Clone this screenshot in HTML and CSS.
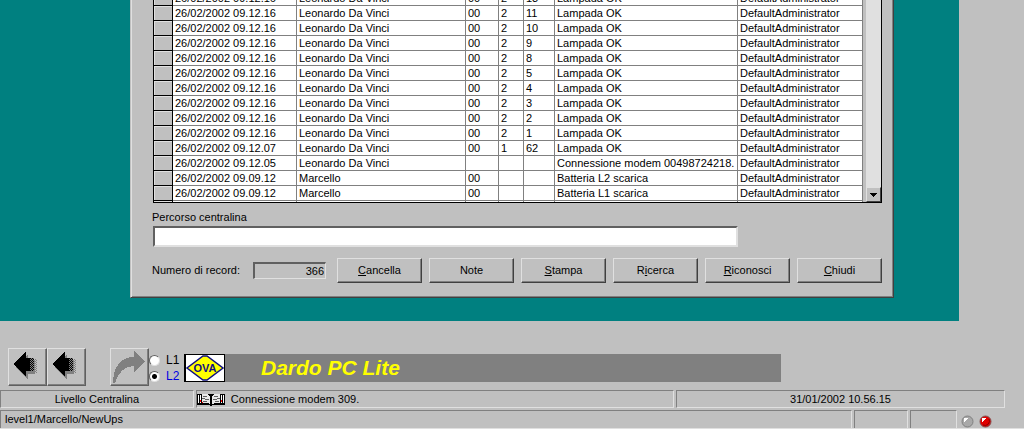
FILE: index.html
```html
<!DOCTYPE html>
<html lang="it">
<head>
<meta charset="utf-8">
<meta name="viewport" content="width=device-width, initial-scale=1">
<title>Dardo PC Lite</title>
<link rel="stylesheet" href="styles.css">
</head>
<body>
<main class="desktop">
  <section class="dialog">
    <div class="grid">
      <table class="log">
        <colgroup>
          <col class="c-mark"><col class="c-date"><col class="c-site"><col class="c-unit"><col class="c-line"><col class="c-lamp"><col class="c-event"><col class="c-user">
        </colgroup>
        <tbody>
          <tr><th></th><td>26/02/2002 09.12.16</td><td>Leonardo Da Vinci</td><td>00</td><td>2</td><td>13</td><td>Lampada OK</td><td>DefaultAdministrator</td></tr>
          <tr><th></th><td>26/02/2002 09.12.16</td><td>Leonardo Da Vinci</td><td>00</td><td>2</td><td>11</td><td>Lampada OK</td><td>DefaultAdministrator</td></tr>
          <tr><th></th><td>26/02/2002 09.12.16</td><td>Leonardo Da Vinci</td><td>00</td><td>2</td><td>10</td><td>Lampada OK</td><td>DefaultAdministrator</td></tr>
          <tr><th></th><td>26/02/2002 09.12.16</td><td>Leonardo Da Vinci</td><td>00</td><td>2</td><td>9</td><td>Lampada OK</td><td>DefaultAdministrator</td></tr>
          <tr><th></th><td>26/02/2002 09.12.16</td><td>Leonardo Da Vinci</td><td>00</td><td>2</td><td>8</td><td>Lampada OK</td><td>DefaultAdministrator</td></tr>
          <tr><th></th><td>26/02/2002 09.12.16</td><td>Leonardo Da Vinci</td><td>00</td><td>2</td><td>5</td><td>Lampada OK</td><td>DefaultAdministrator</td></tr>
          <tr><th></th><td>26/02/2002 09.12.16</td><td>Leonardo Da Vinci</td><td>00</td><td>2</td><td>4</td><td>Lampada OK</td><td>DefaultAdministrator</td></tr>
          <tr><th></th><td>26/02/2002 09.12.16</td><td>Leonardo Da Vinci</td><td>00</td><td>2</td><td>3</td><td>Lampada OK</td><td>DefaultAdministrator</td></tr>
          <tr><th></th><td>26/02/2002 09.12.16</td><td>Leonardo Da Vinci</td><td>00</td><td>2</td><td>2</td><td>Lampada OK</td><td>DefaultAdministrator</td></tr>
          <tr><th></th><td>26/02/2002 09.12.16</td><td>Leonardo Da Vinci</td><td>00</td><td>2</td><td>1</td><td>Lampada OK</td><td>DefaultAdministrator</td></tr>
          <tr><th></th><td>26/02/2002 09.12.07</td><td>Leonardo Da Vinci</td><td>00</td><td>1</td><td>62</td><td>Lampada OK</td><td>DefaultAdministrator</td></tr>
          <tr><th></th><td>26/02/2002 09.12.05</td><td>Leonardo Da Vinci</td><td></td><td></td><td></td><td>Connessione modem 00498724218.</td><td>DefaultAdministrator</td></tr>
          <tr><th></th><td>26/02/2002 09.09.12</td><td>Marcello</td><td>00</td><td></td><td></td><td>Batteria L2 scarica</td><td>DefaultAdministrator</td></tr>
          <tr><th></th><td>26/02/2002 09.09.12</td><td>Marcello</td><td>00</td><td></td><td></td><td>Batteria L1 scarica</td><td>DefaultAdministrator</td></tr>
          <tr class="stub"><th></th><td></td><td></td><td></td><td></td><td></td><td></td><td></td></tr>
        </tbody>
      </table>
      <div class="scrollbar">
        <button class="scroll-down" type="button" aria-label="Scorri in basso">
          <svg width="7" height="4" viewBox="0 0 7 4" shape-rendering="crispEdges"><path d="M0 0h7v1H6v1H5v1H4v1H3V3H2V2H1V1H0z"/></svg>
        </button>
      </div>
    </div>
    <label class="path-label" for="path">Percorso centralina</label>
    <input class="field path" id="path" type="text">
    <div class="actions">
      <label class="count-label" for="count">Numero di record:</label>
      <input class="field count" id="count" type="text" value="366" readonly>
      <div class="buttons">
        <button class="button" type="button"><u>C</u>ancella</button>
        <button class="button" type="button">Note</button>
        <button class="button" type="button"><u>S</u>tampa</button>
        <button class="button" type="button">R<u>i</u>cerca</button>
        <button class="button" type="button"><u>R</u>iconosci</button>
        <button class="button" type="button"><u>C</u>hiudi</button>
      </div>
    </div>
  </section>
</main>

<nav class="toolbar">
  <svg class="defs" width="0" height="0" aria-hidden="true">
    <defs>
      <pattern id="dither" width="2" height="2" patternUnits="userSpaceOnUse"><path d="M0 0h1v1H0zM1 1h1v1H1z" fill="#000"/><path d="M1 0h1v1H1zM0 1h1v1H0z" fill="#808080"/></pattern>
      <pattern id="haze" width="2" height="2" patternUnits="userSpaceOnUse"><path d="M0 0h1v1H0zM1 1h1v1H1z" fill="#808080"/></pattern>
      <symbol id="arrow-left" viewBox="0 0 36 36">
        <g shape-rendering="crispEdges">
          <path d="M7 18L19 5v6h7v14h-7v6z" fill="#808080"/>
          <path d="M24 10h4v14h-4z" fill="url(#haze)"/>
          <path d="M20 9h5v13h-5z" fill="url(#dither)"/>
          <path d="M4 15L17 2v7h4v13h-4v6z" fill="#000"/>
        </g>
      </symbol>
    </defs>
  </svg>
  <button class="tool" type="button" aria-label="Indietro"><svg width="36" height="36"><use href="#arrow-left"/></svg></button>
  <button class="tool" type="button" aria-label="Precedente"><svg width="36" height="36"><use href="#arrow-left"/></svg></button>
  <button class="tool tool-forward" type="button" aria-label="Avanti">
    <svg width="36" height="36" viewBox="0 0 36 36" shape-rendering="crispEdges"><path d="M2 34C2 19 9 8 23 8V2l11 10-11 11v-6C14 17 7 23 4 34z" fill="#808080"/></svg>
  </button>
  <div class="levels">
    <label class="level"><input type="radio" name="level">L1</label>
    <label class="level level-on"><input type="radio" name="level" checked>L2</label>
  </div>
  <div class="banner">
    <svg class="logo" viewBox="0 0 41 28" role="img" aria-label="OVA">
      <path d="M0 0h41v28H0z" fill="#000"/><path d="M2 1h38v26H2z" fill="#fff"/>
      <path d="M19 2h4l16 12-16 12h-4L3 14z" fill="#ff0" stroke="#101080" stroke-width="1.5"/>
      <text class="logo-text" x="21" y="18" text-anchor="middle">OVA</text>
    </svg>
    <h1 class="title">Dardo PC Lite</h1>
  </div>
</nav>

<footer class="status">
  <div class="row">
    <div class="panel level-name">Livello Centralina</div>
    <div class="panel message">
      <svg width="28" height="13" viewBox="0 0 28 13" shape-rendering="crispEdges">
        <path d="M0 1h28v11H15v1h-2v-1H0z" fill="#000"/>
        <path d="M1 2h1v8H1zM3 2h1v8H3zM24 2h1v8h-1zM26 2h1v8h-1z" fill="#fff"/>
        <path d="M5 1h5l3 2v8l-3-1H5zM23 1h-5l-3 2v8l3-1h5z" fill="#e8e8e8"/>
        <path d="M6 3h4v1H6zM5 5h3v1H5zM8 6h4v1H8zM6 8h4v1H6zM17 3h4v1h-4zM20 5h3v1h-3zM16 6h4v1h-4zM18 8h4v1h-4z" fill="#606060"/>
        <path d="M3 7h1v2H3zM5 9h1v1H5zM24 7h1v2h-1z" fill="#f00"/>
      </svg>
      <span>Connessione modem 309.</span>
    </div>
    <div class="panel clock">31/01/2002 10.56.15</div>
  </div>
  <div class="row row-last">
    <div class="panel place">level1/Marcello/NewUps</div>
    <div class="panel slot"></div>
    <div class="panel slot slot-small"></div>
    <div class="leds">
      <svg width="13" height="13" viewBox="0 0 13 13"><circle cx="6.5" cy="6.5" r="5.5" fill="#a8a8a8" stroke="#808080"/><path d="M3 3h4v1H6v1H5v1H4v1H3z" fill="#fff"/></svg>
      <svg width="13" height="13" viewBox="0 0 13 13"><circle cx="6.5" cy="6.5" r="5.5" fill="#e00000" stroke="#805050"/><path d="M10 4a4.500 4.500 0 0 1-6 6" fill="none" stroke="#900000"/><path d="M3 3h4v1H6v1H5v1H4v1H3z" fill="#fff"/></svg>
    </div>
  </div>
</footer>
</body>
</html>
```
FILE: styles.css
```css
* {
  box-sizing: border-box;
}

body {
  margin: 0;
  height: 100vh;
  display: flex;
  flex-direction: column;
  overflow: hidden;
  background: #c0c0c0;
  color: #000;
  font: 11px/13px "Liberation Sans", Arial, sans-serif;
}

button,
input {
  font: inherit;
  color: inherit;
}

.desktop {
  flex: 1;
  min-height: 0;
  margin-right: 65px;
  padding: 0 65px 23px 130px;
  display: flex;
  flex-direction: column;
  justify-content: flex-end;
  overflow: hidden;
  background: #008080;
}

.dialog {
  flex: none;
  display: flex;
  flex-direction: column;
  padding: 0 11px 14px 21px;
  background: #c0c0c0;
  border: 1px solid #404040;
  border-left-color: #c0c0c0;
  box-shadow: inset 1px 0 #e0e0e0, inset -1px -1px #808080;
}

.grid {
  display: flex;
  margin-left: 1px;
  border: 1px solid #000;
  border-top: 0;
}

.log {
  flex: 1;
  min-width: 0;
  table-layout: fixed;
  border-collapse: separate;
  border-spacing: 0;
  background: #fff;
}

.c-mark { width: 19px; }
.c-date { width: 124px; }
.c-site { width: 169px; }
.c-unit { width: 33px; }
.c-line { width: 25px; }
.c-lamp { width: 31px; }
.c-event { width: auto; }
.c-user { width: 125px; }

.log th,
.log td {
  height: 15px;
  padding: 0 0 0 2px;
  border-right: 1px solid #808080;
  border-bottom: 1px solid #808080;
  text-align: left;
  line-height: 14px;
  white-space: nowrap;
}

.log th {
  background: #c0c0c0;
  border-color: #000;
  box-shadow: inset 1px 1px #e0e0e0;
}

.log .stub th,
.log .stub td {
  height: 1px;
  border-bottom: 0;
  line-height: 0;
}

.scrollbar {
  width: 18px;
  display: flex;
  align-items: flex-end;
  background: #e0e0e0;
  border-left: 3px solid #c0c0c0;
}

.scroll-down {
  width: 15px;
  height: 15px;
  padding: 0;
  display: flex;
  align-items: center;
  justify-content: center;
  background: #c0c0c0;
  border: 1px solid #e0e0e0;
  border-right-color: #404040;
  border-bottom-color: #404040;
}

.path-label {
  margin: 8px 0 2px;
}

.field {
  border: 2px solid #e0e0e0;
  border-top-color: #606060;
  border-left-color: #606060;
  border-radius: 0;
  outline: 0;
}

.path {
  height: 21px;
  margin: 0 144px 0 1px;
  padding: 0 2px;
  background: #fff;
}

.actions {
  display: flex;
  align-items: center;
  margin-top: 11px;
}

.count-label {
  width: 101px;
}

.count {
  width: 73px;
  height: 17px;
  padding: 0 1px 0 0;
  background: #c0c0c0;
  border-width: 2px 1px 1px 2px;
  text-align: right;
}

.buttons {
  display: flex;
  gap: 7px;
  margin-left: 11px;
}

.button {
  width: 85px;
  height: 25px;
  padding: 0;
  background: #c0c0c0;
  border: 1px solid #404040;
  border-top-color: #e0e0e0;
  border-left-color: #e0e0e0;
  box-shadow: inset -1px -1px #808080;
}

.toolbar {
  display: flex;
  align-items: center;
  height: 69px;
  padding: 23px 0 0 8px;
}

.defs {
  position: absolute;
}

.tool {
  width: 39px;
  height: 38px;
  padding: 0;
  background: #c0c0c0;
  border: 1px solid #606060;
  border-top-color: #e0e0e0;
  border-left-color: #e0e0e0;
  box-shadow: inset -1px -1px #808080;
}

.tool svg {
  display: block;
}

.tool-forward {
  margin-left: 24px;
}

.levels {
  width: 35px;
  margin-top: 2px;
}

.level {
  display: flex;
  align-items: center;
  gap: 6px;
  height: 16px;
  font-size: 12px;
}

.level input {
  appearance: none;
  width: 11px;
  height: 11px;
  margin: 0;
  background: #fff;
  border: 1px solid #e0e0e0;
  border-top-color: #606060;
  border-left-color: #606060;
  border-radius: 50%;
}

.level input:checked {
  background: radial-gradient(circle, #000 2px, #fff 3px);
}

.level-on {
  color: #0000e0;
}

.banner {
  flex: 1;
  display: flex;
  align-items: center;
  height: 28px;
  margin: 2px 243px 0 0;
  background: #808080;
}

.logo {
  flex: none;
  width: 41px;
  height: 28px;
}

.logo-text {
  font: bold 11px "Liberation Sans", Arial, sans-serif;
  fill: #101080;
}

.title {
  margin: 0 0 0 36px;
  color: #ff0;
  font: italic bold 21px/28px "Liberation Sans", Arial, sans-serif;
}

.status {
  display: flex;
  flex-direction: column;
  gap: 2px;
}

.row {
  display: flex;
  gap: 2px;
  padding-right: 19px;
}

.panel {
  display: flex;
  align-items: center;
  height: 18px;
  border: 1px solid #e0e0e0;
  border-top-color: #808080;
  border-left-color: #808080;
  white-space: nowrap;
}

.level-name {
  flex: 193 1 0;
  justify-content: center;
}

.message {
  flex: 479 1 0;
  gap: 6px;
}

.clock {
  flex: 329 1 0;
  justify-content: center;
}

.row-last {
  padding-right: 32px;
  border-bottom: 1px solid #e0e0e0;
}

.row-last .panel {
  border-bottom: 0;
}

.place {
  flex: 1;
  padding-left: 4px;
}

.slot {
  width: 54px;
}

.slot-small {
  width: 47px;
}

.leds {
  display: flex;
  align-items: flex-end;
  gap: 5px;
  padding-left: 2px;
}
```
